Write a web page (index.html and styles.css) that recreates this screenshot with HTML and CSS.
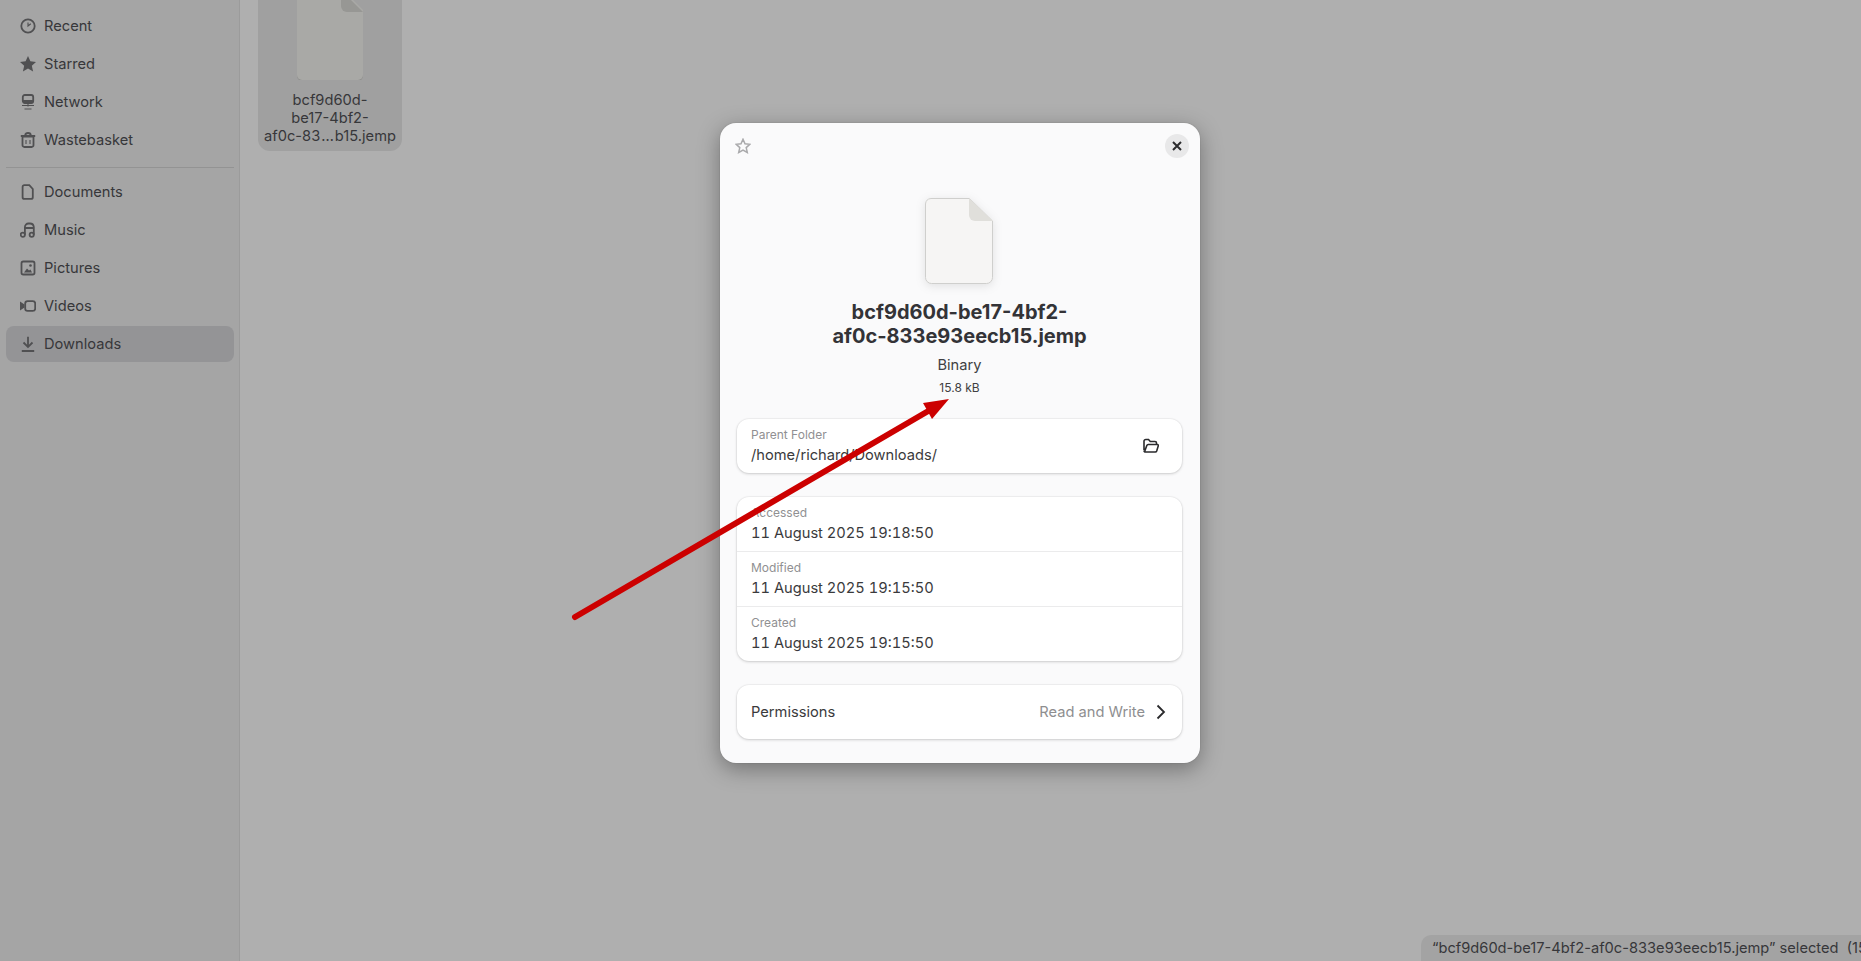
FILE: index.html
```html
<!DOCTYPE html>
<html lang="en">
<head>
  <meta charset="UTF-8" />
  <title>Downloads</title>
  <link rel="stylesheet" href="styles.css">
</head>
<body>

<aside class="sidebar">
  <nav class="places">
    <a class="place">
      <svg class="place-icon" viewBox="0 0 16 16"><circle cx="8" cy="8" r="6.7"/><path class="thin" d="M8 4.500V8l2.800-2.300"/></svg>
      Recent
    </a>
    <a class="place">
      <svg class="place-icon" viewBox="0 0 16 16"><path class="solid" d="M8 0l2.400 5.300 5.600.6-4.200 3.800 1.300 5.700L8 12.400l-5.100 3 1.300-5.700L0 5.900l5.600-.6z"/></svg>
      Starred
    </a>
    <a class="place">
      <svg class="place-icon" viewBox="0 0 16 16"><rect x="2.800" y="1" width="10.400" height="8" rx="2"/><path class="solid" d="M3 6h10v3H3z"/><path class="thin" d="M8 9v3.500M2 11.500h12M4.500 15h7"/></svg>
      Network
    </a>
    <a class="place">
      <svg class="place-icon" viewBox="0 0 16 16"><path d="M2.500 4.500h11v8.700a1.800 1.800 0 0 1-1.800 1.800H4.300a1.800 1.800 0 0 1-1.800-1.800zM.8 4h14.400M5.200 3.500C5.200 1.500 6.500 1 8 1s2.800.5 2.800 2.500"/><path class="thin" d="M6 8v4M10 8v4"/></svg>
      Wastebasket
    </a>
  </nav>
  <hr class="sidebar-rule">
  <nav class="places">
    <a class="place">
      <svg class="place-icon" viewBox="0 0 16 16"><path d="M4.300 1.200h5l3.500 3.800v8.200a1.700 1.700 0 0 1-1.700 1.700H4.300a1.700 1.700 0 0 1-1.700-1.700V2.900a1.700 1.700 0 0 1 1.700-1.700z"/></svg>
      Documents
    </a>
    <a class="place">
      <svg class="place-icon" viewBox="0 0 16 16"><circle cx="2.800" cy="12.700" r="2.100"/><circle cx="11.700" cy="12.700" r="2.100"/><path d="M4.900 12.700V5a3.500 3.500 0 0 1 3.500-3.500h1.400A3.900 3.900 0 0 1 13.800 5v7.700M4.900 6h8.900"/></svg>
      Music
    </a>
    <a class="place">
      <svg class="place-icon" viewBox="0 0 16 16"><rect x="1.500" y="1.500" width="13" height="13" rx="1.800"/><circle class="solid" cx="10.500" cy="5.500" r="1.300"/><path class="solid" d="M4 12.500l3-4 2 2 1.500-1 1.500 3z"/></svg>
      Pictures
    </a>
    <a class="place">
      <svg class="place-icon" viewBox="0 0 16 16"><rect x="5.200" y="3.200" width="10" height="9.600" rx="2.400"/><path class="solid" d="M0 3.500l4.500 3v3L0 12.500z"/></svg>
      Videos
    </a>
    <a class="place place-active">
      <svg class="place-icon" viewBox="0 0 16 16"><path d="M8 .8v10M3.500 6.500L8 11l4.500-4.500M1.800 15h12.400"/></svg>
      Downloads
    </a>
  </nav>
</aside>

<main class="files">
  <div class="file-item">
    <svg class="file-thumb" viewBox="0 0 66 90">
      <path class="thumb-page" d="M5 0h41l20 20v65a5 5 0 0 1-5 5H5a5 5 0 0 1-5-5V5a5 5 0 0 1 5-5z"/>
      <path class="thumb-fold" d="M44 0l22 22H50a6 6 0 0 1-6-6z"/>
    </svg>
    <div class="file-name">bcf9d60d-<br>be17-4bf2-<br>af0c-83<span class="ellipsis">…</span>b15.jemp</div>
  </div>
  <div class="status-pill">“bcf9d60d-be17-4bf2-af0c-833e93eecb15.jemp” selected&nbsp; (15.8 kB)</div>
</main>

<section class="dialog">
  <div class="dialog-top">
    <svg class="star-btn" viewBox="0 0 16 16"><path d="M8 1.300l2 4.500 4.900.5-3.700 3.300 1.100 4.800L8 12l-4.300 2.400 1.100-4.800L1.100 6.300 6 5.800z"/></svg>
    <button class="close-btn">
      <svg viewBox="0 0 16 16"><path d="M4 4l8 8M12 4l-8 8"/></svg>
    </button>
  </div>

  <svg class="doc-icon" viewBox="0 0 68 86">
    <path class="doc-page" d="M6 .5h38.500L67.500 23v56.500a6 6 0 0 1-6 6H6.500a6 6 0 0 1-6-6V6a6 6 0 0 1 5.500-5.500z"/>
    <path class="doc-fold" d="M44 0l24 23H50a6 6 0 0 1-6-6z"/>
  </svg>

  <h1 class="doc-title">bcf9d60d-be17-4bf2-<br>af0c-833e93eecb15.jemp</h1>
  <div class="doc-type">Binary</div>
  <div class="doc-size">15.8 kB</div>

  <div class="card">
    <div class="row row-split">
      <div>
        <div class="row-label">Parent Folder</div>
        <div class="row-value">/home/richard/Downloads/</div>
      </div>
      <svg class="open-icon" viewBox="0 0 16 16"><path d="M1 12V3.300A1.800 1.800 0 0 1 2.800 1.500h2.700l1.800 2h4.700a1.500 1.500 0 0 1 1.500 1.500v2M1 12.500a1.500 1.500 0 0 0 1.500 1.500h9.800a1.500 1.500 0 0 0 1.400-1l1.500-5a1 1 0 0 0-1-1.500H5.200a1.500 1.500 0 0 0-1.400 1l-2 5.500"/></svg>
    </div>
  </div>

  <div class="card">
    <div class="row">
      <div class="row-label">Accessed</div>
      <div class="row-value row-date">11 August 2025 19:18:50</div>
    </div>
    <div class="row">
      <div class="row-label">Modified</div>
      <div class="row-value row-date">11 August 2025 19:15:50</div>
    </div>
    <div class="row">
      <div class="row-label">Created</div>
      <div class="row-value row-date">11 August 2025 19:15:50</div>
    </div>
  </div>

  <div class="card">
    <div class="row row-split">
      <div class="row-value">Permissions</div>
      <div class="row-end">
        <span class="row-muted">Read and Write</span>
        <svg class="chevron" viewBox="0 0 16 16"><path d="M4.500 1.500L11 8l-6.500 6.500"/></svg>
      </div>
    </div>
  </div>
</section>

<svg class="arrow" viewBox="0 0 1861 961">
  <line x1="575" y1="617" x2="930" y2="410"/>
  <polygon points="949,399 923,403 932,419"/>
</svg>

</body>
</html>
```

FILE: styles.css
```css
/* Reset */
* {
  box-sizing: border-box;
}
html, body {
  height: 100%;
}
body {
  margin: 0;
  display: flex;
  overflow: hidden;
  font-family: Inter, "Noto Sans", sans-serif;
  font-size: 14.670px;
  color: #2c2c2e;
  background: #afafaf;
}

/* Sidebar */
.sidebar {
  width: 240px;
  flex-shrink: 0;
  padding: 8px 5px 8px 6px;
  background: #a5a5a5;
  border-right: 1px solid #9b9b9b;
}
.places {
  display: flex;
  flex-direction: column;
  gap: 2px;
}
.place {
  display: flex;
  align-items: center;
  gap: 8px;
  height: 36px;
  padding: 0 14px;
  color: #37373a;
}
.place-active {
  background: #949496;
  border-radius: 8px;
}
.place-icon {
  width: 16px;
  height: 16px;
  flex-shrink: 0;
  fill: none;
  stroke: #505052;
  stroke-width: 1.800;
}
.place-icon .solid {
  fill: #505052;
  stroke: none;
}
.place-icon .thin {
  stroke-width: 1.100;
}
.sidebar-rule {
  height: 1px;
  margin: 9px 0 6px;
  border: none;
  background: #939393;
}

/* File area */
.files {
  flex: 1;
  position: relative;
  padding-left: 18px;
}
.file-item {
  width: 144px;
  height: 151px;
  display: flex;
  flex-direction: column;
  align-items: center;
  justify-content: flex-end;
  padding-bottom: 6px;
  background: #a0a0a0;
  border-radius: 0 0 12px 12px;
}
.file-thumb {
  width: 66px;
  height: 90px;
  flex-shrink: 0;
  margin: -20px 0 11px;
}
.thumb-page {
  fill: #a9a9a6;
  filter: drop-shadow(0 1px 0 #8e8e8c);
}
.thumb-fold {
  fill: #979794;
}
.file-name {
  line-height: 18px;
  text-align: center;
  white-space: nowrap;
  color: #37373a;
}
.ellipsis {
  margin: 0 1px;
}
.status-pill {
  position: absolute;
  left: 1181px;
  bottom: 0;
  height: 26px;
  padding: 0 11px;
  line-height: 26px;
  white-space: nowrap;
  background: #a3a3a3;
  border-radius: 10px 0 0 0;
  color: #37373a;
}

/* Properties dialog */
.dialog {
  position: absolute;
  left: 720px;
  top: 123px;
  width: 480px;
  height: 640px;
  padding: 0 18px 0 17px;
  background: #fafafb;
  border-radius: 16px;
  box-shadow: 0 6px 22px rgba(0,0,0,0.35), 0 0 0 1px rgba(0,0,0,0.04);
  display: flex;
  flex-direction: column;
  align-items: center;
}
.dialog-top {
  align-self: stretch;
  display: flex;
  justify-content: space-between;
  align-items: center;
  margin: 11px -7px 0 -2px;
}
.star-btn {
  width: 16px;
  height: 16px;
  fill: none;
  stroke: #a9a9ab;
  stroke-width: 1.500;
}
.close-btn {
  width: 24px;
  height: 24px;
  padding: 4px;
  border: none;
  border-radius: 50%;
  background: #e8e8e9;
  display: flex;
}
.close-btn svg {
  fill: none;
  stroke: #2c2c2e;
  stroke-width: 2;
}
.doc-icon {
  width: 68px;
  height: 86px;
  flex-shrink: 0;
  margin: 40px 1px 0 0;
  filter: drop-shadow(0 2px 5px rgba(0,0,0,0.1));
}
.doc-page {
  fill: #f6f5f4;
  stroke: #cfcfcd;
  stroke-width: 1;
}
.doc-fold {
  fill: #e0dfdb;
}
.doc-title {
  margin: 16px 0 0;
  font-size: 20px;
  line-height: 24px;
  font-weight: 700;
  text-align: center;
  color: #333337;
}
.doc-type {
  margin-top: 8px;
  line-height: 18px;
  color: #404042;
}
.doc-size {
  margin-top: 6px;
  font-size: 12px;
  line-height: 16px;
  color: #404042;
}
.card {
  align-self: stretch;
  flex-shrink: 0;
  margin-bottom: 24px;
  background: #fff;
  border-radius: 12px;
  box-shadow: 0 1px 3px rgba(0,0,0,0.17), 0 0 0 1px rgba(0,0,0,0.03);
}
.doc-size + .card {
  margin-top: 23px;
}
.row {
  height: 55px;
  padding: 0 12px 0 14px;
  display: flex;
  flex-direction: column;
  justify-content: center;
  border-bottom: 1px solid #ebebec;
}
.row:last-child {
  height: 54px;
  border-bottom: none;
}
.row-split {
  flex-direction: row;
  justify-content: space-between;
  align-items: center;
}
.row-label {
  font-size: 12px;
  line-height: 18px;
  color: #909092;
}
.row-value {
  line-height: 22px;
  color: #3a3a3c;
}
.row-date {
  font-feature-settings: "tnum";
}
.row-end {
  display: flex;
  align-items: center;
  gap: 8px;
}
.row-muted {
  color: #8e8e90;
}
.open-icon {
  width: 16px;
  height: 16px;
  margin-right: 11px;
  fill: none;
  stroke: #2a2a2c;
  stroke-width: 1.600;
}
.chevron {
  width: 16px;
  height: 16px;
  margin-right: 1px;
  fill: none;
  stroke: #2a2a2c;
  stroke-width: 1.800;
}

/* Annotation arrow drawn over the screenshot */
.arrow {
  position: absolute;
  left: 0;
  top: 0;
  width: 1861px;
  height: 961px;
  pointer-events: none;
}
.arrow line {
  stroke: #cc0000;
  stroke-width: 6;
  stroke-linecap: round;
}
.arrow polygon {
  fill: #cc0000;
}
```
